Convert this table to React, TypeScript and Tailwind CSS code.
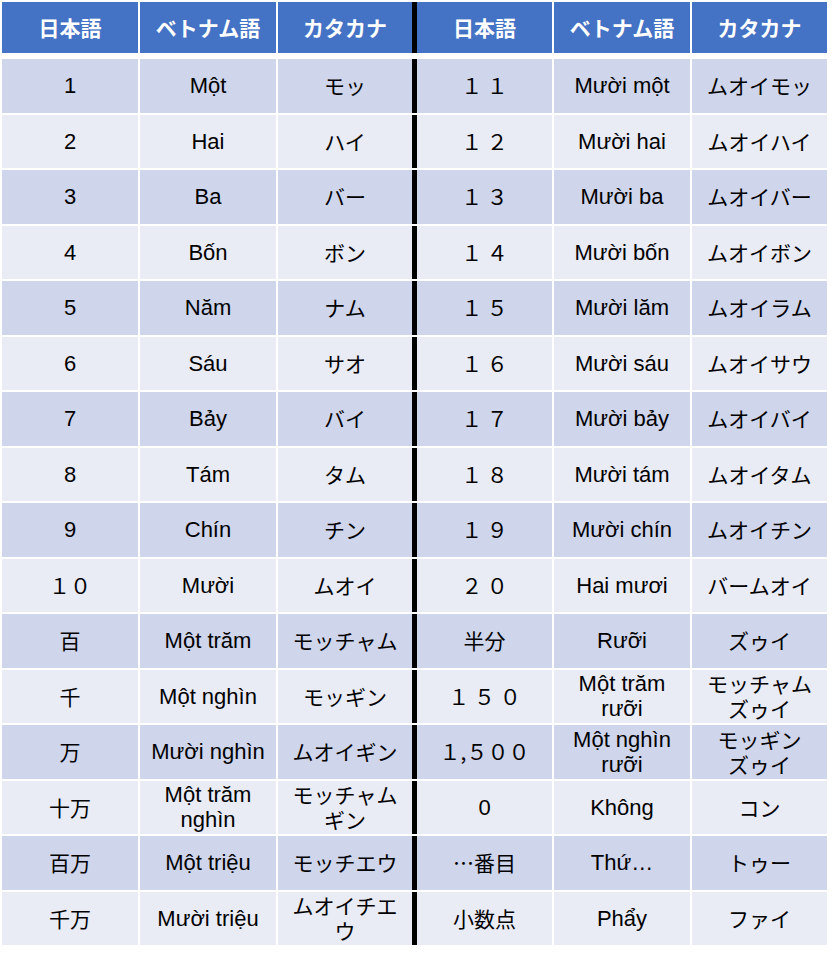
import React from "react";

type Cell = string[];

const rows: Cell[][] = [
  [["1"], ["Một"], ["モッ"], ["１ １"], ["Mười một"], ["ムオイモッ"]],
  [["2"], ["Hai"], ["ハイ"], ["１ ２"], ["Mười hai"], ["ムオイハイ"]],
  [["3"], ["Ba"], ["バー"], ["１ ３"], ["Mười ba"], ["ムオイバー"]],
  [["4"], ["Bốn"], ["ボン"], ["１ ４"], ["Mười bốn"], ["ムオイボン"]],
  [["5"], ["Năm"], ["ナム"], ["１ ５"], ["Mười lăm"], ["ムオイラム"]],
  [["6"], ["Sáu"], ["サオ"], ["１ ６"], ["Mười sáu"], ["ムオイサウ"]],
  [["7"], ["Bảy"], ["バイ"], ["１ ７"], ["Mười bảy"], ["ムオイバイ"]],
  [["8"], ["Tám"], ["タム"], ["１ ８"], ["Mười tám"], ["ムオイタム"]],
  [["9"], ["Chín"], ["チン"], ["１ ９"], ["Mười chín"], ["ムオイチン"]],
  [["１０"], ["Mười"], ["ムオイ"], ["２ ０"], ["Hai mươi"], ["バームオイ"]],
  [["百"], ["Một trăm"], ["モッチャム"], ["半分"], ["Rưỡi"], ["ズゥイ"]],
  [["千"], ["Một nghìn"], ["モッギン"], ["１ ５ ０"], ["Một trăm", "rưỡi"], ["モッチャム", "ズゥイ"]],
  [["万"], ["Mười nghìn"], ["ムオイギン"], ["１,５００"], ["Một nghìn", "rưỡi"], ["モッギン", "ズゥイ"]],
  [["十万"], ["Một trăm", "nghìn"], ["モッチャム", "ギン"], ["0"], ["Không"], ["コン"]],
  [["百万"], ["Một triệu"], ["モッチエウ"], ["…番目"], ["Thứ…"], ["トゥー"]],
  [["千万"], ["Mười triệu"], ["ムオイチエ", "ウ"], ["小数点"], ["Phẩy"], ["ファイ"]],
];

const widths = ["w-[136px]", "w-[136px]", "w-[134px]", "w-[135px]", "w-[136px]", "w-[135px]"];
const headers = ["日本語", "ベトナム語", "カタカナ", "日本語", "ベトナム語", "カタカナ"];

const jp = "font-['Noto_Sans_CJK_JP',sans-serif] text-[21px] font-normal";
const vi = "font-['Liberation_Sans','Noto_Sans_CJK_JP',sans-serif] text-[22px] font-normal";

function isLatin(s: string) {
  return /^[A-Za-zÀ-ỹ0-9 …ăâđêôơưĂÂĐÊÔƠƯ]+$/.test(s) && !/[０-９]/.test(s);
}

function CellBox({ lines, w, bg }: { lines: string[]; w: string; bg: string }) {
  const font = isLatin(lines.join(" ")) ? vi : jp;
  return (
    <div className={`${w} ${bg} ${font} flex flex-col items-center justify-center text-center leading-[25px] text-black`}>
      {lines.map((l, i) => (
        <div key={i} className="whitespace-pre">
          {l}
        </div>
      ))}
    </div>
  );
}

export default function App() {
  return (
    <div className="w-[833px] h-[959px] bg-white pl-[2px] pt-[2px]">
      {/* header */}
      <div className="flex h-[51px]">
        {headers.map((h, i) => (
          <React.Fragment key={i}>
            {i === 3 && <div className="w-[5px] bg-black" />}
            <div
              className={`${widths[i]} ${i !== 2 && i !== 5 ? "mr-[2px]" : ""} bg-[#4472C4] flex items-center justify-center font-['Noto_Sans_CJK_JP',sans-serif] text-[21px] font-bold text-white`}
            >
              {h}
            </div>
          </React.Fragment>
        ))}
      </div>
      {/* body */}
      <div className="mt-[6px] flex flex-col gap-[2px]">
        {rows.map((r, ri) => {
          const bg = ri % 2 === 0 ? "bg-[#CFD5EA]" : "bg-[#E9EBF5]";
          return (
            <div key={ri} className="flex h-[53.5px]">
              {r.map((c, ci) => (
                <React.Fragment key={ci}>
                  {ci === 3 && <div className="w-[5px] bg-black" />}
                  <div className={`flex ${ci !== 2 && ci !== 5 ? "mr-[2px]" : ""}`}>
                    <CellBox lines={c} w={widths[ci]} bg={bg} />
                  </div>
                </React.Fragment>
              ))}
            </div>
          );
        })}
      </div>
    </div>
  );
}
